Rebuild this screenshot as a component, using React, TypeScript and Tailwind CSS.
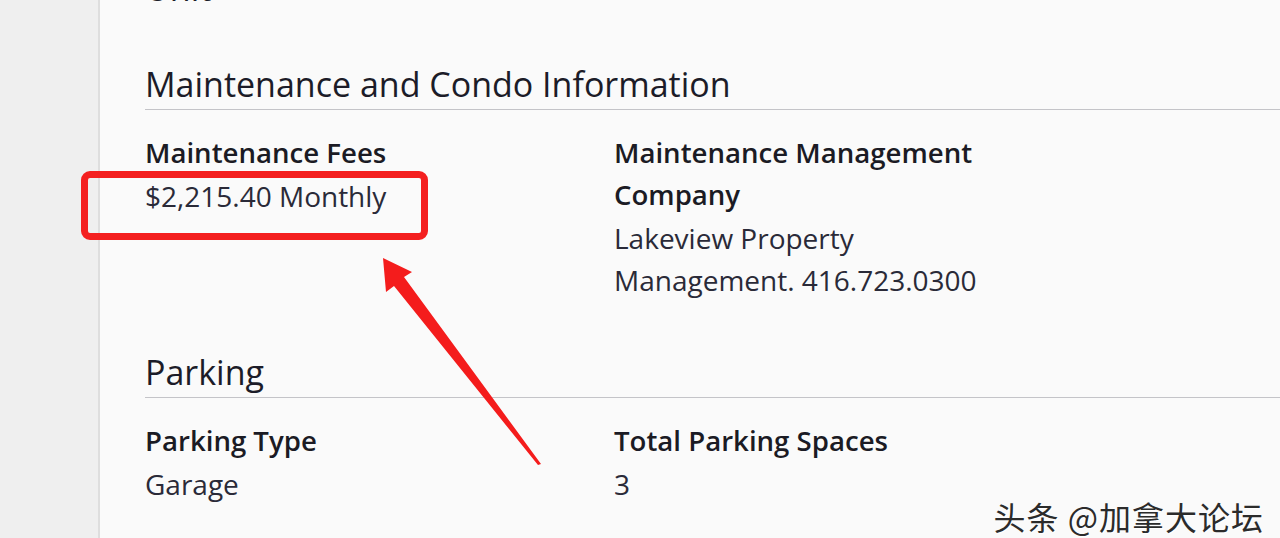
import React from 'react';

interface FieldProps {
  label: React.ReactNode;
  value: React.ReactNode;
}

const Field: React.FC<FieldProps> = ({ label, value }) => (
  <div className="flex flex-col">
    <div className="font-semibold text-[27.6px] leading-[42px] text-[#1b1b24]">{label}</div>
    <div className="text-[28px] leading-[42px] text-[#2a2a38] mt-[2px]">{value}</div>
  </div>
);

const Section: React.FC<{ title: string; children: React.ReactNode }> = ({ title, children }) => (
  <section>
    <h2 className="text-[34px] leading-[44px] text-[#1c1c28] pb-[3px] border-b border-[#c4c4c8]">{title}</h2>
    <div className="grid grid-cols-[469px_1fr] pt-[21px]">{children}</div>
  </section>
);

export default function App() {
  return (
    <div className="relative w-[1280px] h-[538px] overflow-hidden flex bg-[#fafafa] font-['Open_Sans','Liberation_Sans',sans-serif]">
      {/* left rail */}
      <div className="w-[100px] shrink-0 bg-[#efefef] border-r-2 border-[#dedede]" />

      <main className="flex-1 pl-[45px]">
        <div className="-mt-[34px] text-[34px] leading-[44px] text-[#1c1c28]">Unit</div>

        <div className="mt-[52px]">
          <Section title="Maintenance and Condo Information">
            <Field label="Maintenance Fees" value="$2,215.40 Monthly" />
            <Field
              label={<>Maintenance Management<br />Company</>}
              value={<>Lakeview Property<br />Management. 416.723.0300</>}
            />
          </Section>
        </div>

        <div className="mt-[49px]">
          <Section title="Parking">
            <Field label="Parking Type" value="Garage" />
            <Field label="Total Parking Spaces" value="3" />
          </Section>
        </div>
      </main>

      {/* annotation: highlight box */}
      <div className="absolute left-[81px] top-[171px] w-[347px] h-[69px] border-[7px] border-[#f41f1f] rounded-[9px]" />

      {/* annotation: arrow */}
      <svg className="absolute left-0 top-0" width="1280" height="538" viewBox="0 0 1280 538">
        <polygon
          points="383,258 412,272 404,277 541,464 538,465 394,286 386,292"
          fill="#f41c1c"
        />
      </svg>

      {/* watermark */}
      <div className="absolute right-[16px] bottom-[2px] text-[32px] leading-[40px] tracking-[1px] text-[#2b2b2b] [text-shadow:1px_1px_0_#ffffff] font-['Noto_Sans_CJK_SC',sans-serif]">
        头条 @加拿大论坛
      </div>
    </div>
  );
}
